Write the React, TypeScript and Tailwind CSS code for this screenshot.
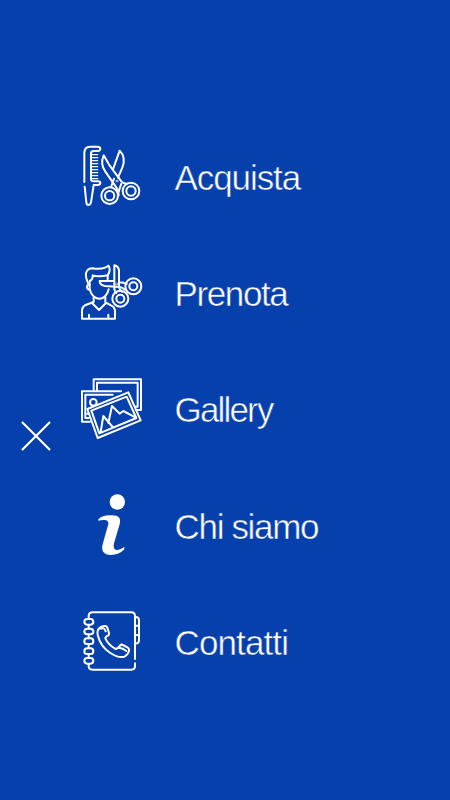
import type { ReactNode } from 'react';
import clsx from 'clsx';

type IconProps = { viewBox: string; children: ReactNode };

function LineIcon({ viewBox, children }: IconProps) {
  return (
    <svg
      viewBox={viewBox}
      className="h-[74px] w-[74px] shrink-0"
      fill="none"
      stroke="white"
      strokeWidth="6"
      strokeLinecap="round"
      strokeLinejoin="round"
      aria-hidden="true"
    >
      {children}
    </svg>
  );
}

function CombScissorsIcon() {
  return (
    <LineIcon viewBox="0 6 222 222">
      <path d="M31 132 V45 Q31 26 49 26 H69 Q79 26 79 32 Q79 38 71 39 H58 Q51 39 51 47 V122 Q51 131 60 130 H72 Q79 130 79 135 Q79 141 70 141 H59 L51 193 Q49 201 43 201 Q38 201 37 193 L32 146" />
      <path
        d="M53 50 H71 M53 59 H71 M53 68 H71 M53 77 H71 M53 86 H71 M53 95 H71 M53 104 H71 M53 113 H71 M53 122 H71"
        strokeWidth="4"
      />
      <path d="M103 76 L89 52 Q78 78 94 101 L127 148 Q134 157 134 172" />
      <path d="M105 80 L142 130 Q148 137 159 137" />
      <path d="M118 91 L137 38 Q157 58 145 89 L132 119" />
      <path d="M120 122 L112 145 M142 137 L134 160" />
      <circle cx="107" cy="173" r="25" />
      <circle cx="107" cy="173" r="14" />
      <circle cx="171" cy="159" r="25" />
      <circle cx="171" cy="159" r="14" />
      <circle cx="129" cy="129" r="1" />
    </LineIcon>
  );
}

function HaircutIcon() {
  return (
    <LineIcon viewBox="0 1 222 222">
      <path d="M44 87 Q34 66 36 52 Q41 38 55 38 Q78 42 93 36 Q99 34 103 30 Q112 42 101 59" />
      <path d="M47 99 V76 Q58 70 56 59 Q75 65 101 59 V76" />
      <path d="M47 87 Q39 87 39 94 Q39 102 48 102 Q52 121 67 127 Q76 131 86 127 Q99 121 104 101" />
      <path d="M59 125 V139 L35 148 Q24 153 24 166 V189 H123 V166 Q123 154 111 149 L94 140 V125" />
      <path d="M54 142 L75 163 L96 142 M45 177 V188 M103 177 V188" />
      <path d="M120 76 H77 Q76 87 92 91 L137 94 Q145 95 153 102" />
      <path d="M121 29 V99 Q121 106 127 112 M121 29 Q135 32 135 47 V93 Q136 103 144 108 M137 80 Q150 80 158 85" />
      <circle cx="139" cy="129" r="24" />
      <circle cx="139" cy="129" r="12" />
      <circle cx="178" cy="92" r="24" />
      <circle cx="178" cy="92" r="12" />
      <circle cx="128" cy="85" r="1" />
    </LineIcon>
  );
}

function PhotosIcon() {
  return (
    <LineIcon viewBox="0 8 222 222">
      <path d="M59 60 V27 H201 V119 H187" />
      <path d="M69 60 V37 H191 V109 H184" />
      <path d="M48 154 H24 V63 H141" />
      <path d="M45 143 H34 V73 H116" />
      <circle cx="58" cy="96" r="10" />
      <path d="M40 116 L163 66 L200 150 L71 203 Z" />
      <path d="M52 121 L158 79 L187 143 L76 189 Z" />
      <path d="M80 185 L88 137 L116 170 M103 158 L114 107 L137 130 L148 122 L184 141" />
      <path d="M39 130 H44" />
    </LineIcon>
  );
}

function InfoIcon() {
  return (
    <svg viewBox="0 3 222 222" className="h-[74px] w-[74px] shrink-0" fill="white" aria-hidden="true">
      <circle cx="130" cy="42" r="23" />
      <path d="M73 98 V94 Q84 82 106 82 Q145 78 137 109 L120 166 Q115 188 131 186 Q140 184 151 177 V184 Q135 201 111 201 Q78 200 86 169 L102 112 Q107 98 93 96 Q84 95 73 98 Z" />
    </svg>
  );
}

function PhoneBookIcon() {
  return (
    <LineIcon viewBox="0 5 222 222">
      <path d="M44 42 V35 Q44 24 56 24 H172 Q183 24 183 35 V164" />
      <path d="M183 177 V185 Q183 196 172 196 H56 Q44 196 44 185 V179" />
      <path d="M44 62 V73 M44 91 V102 M44 120 V131 M44 149 V160" />
      <rect x="31" y="44" width="27" height="17" rx="8.5" />
      <rect x="31" y="73" width="27" height="17" rx="8.5" />
      <rect x="31" y="102" width="27" height="17" rx="8.5" />
      <rect x="31" y="132" width="27" height="17" rx="8.5" />
      <rect x="31" y="161" width="27" height="17" rx="8.5" />
      <path d="M184 38 Q195 38 195 48 V108 Q195 118 184 118 M184 64 H194 M184 92 H194" />
      <path d="M79 69 Q68 76 71 91 Q79 126 109 146 Q134 162 151 157 Q158 154 162 147 Q165 142 165 137 Q166 132 160 129 L147 122 Q142 119 138 124 Q130 136 123 133 Q102 120 94 102 Q94 97 103 93 Q106 91 105 86 L100 70 Q98 64 91 65 Q84 66 79 69 Z" />
      <path d="M81 73 Q91 68 95 81 M136 131 Q145 130 157 140" />
    </LineIcon>
  );
}

function CloseIcon() {
  return (
    <svg viewBox="0 0 30 30" className="h-[30px] w-[30px]" stroke="white" strokeWidth="2.2" aria-hidden="true">
      <path d="M1 1 L29 29 M29 1 L1 29" />
    </svg>
  );
}

const MENU_ITEMS = [
  { label: 'Acquista', icon: <CombScissorsIcon />, tracking: 'tracking-[-1.1px]' },
  { label: 'Prenota', icon: <HaircutIcon />, tracking: 'tracking-[-1.4px]' },
  { label: 'Gallery', icon: <PhotosIcon />, tracking: 'tracking-[-1.85px]' },
  { label: 'Chi siamo', icon: <InfoIcon />, tracking: 'tracking-[-1.35px]' },
  { label: 'Contatti', icon: <PhoneBookIcon />, tracking: 'tracking-[-0.9px]' },
];

export default function App() {
  return (
    <div className="flex h-screen w-full overflow-hidden bg-[#0540ad] font-['Liberation_Sans',Arial,sans-serif] text-white">
      <button type="button" aria-label="Chiudi" className="mt-[421px] ml-[21px] h-[30px] w-[30px] shrink-0">
        <CloseIcon />
      </button>
      <nav className="ml-[23px] flex flex-col gap-[42.4px] pt-[140px]">
        {MENU_ITEMS.map((item) => (
          <a key={item.label} href="#" className="flex h-[74px] items-center gap-[26.6px]">
            {item.icon}
            {/* the outline in the background colour thins the strokes to a light weight */}
            <span
              className={clsx(
                'pt-px text-[35px] leading-[40px] whitespace-nowrap [-webkit-text-stroke:0.5px_#0540ad]',
                item.tracking,
              )}
            >
              {item.label}
            </span>
          </a>
        ))}
      </nav>
    </div>
  );
}
